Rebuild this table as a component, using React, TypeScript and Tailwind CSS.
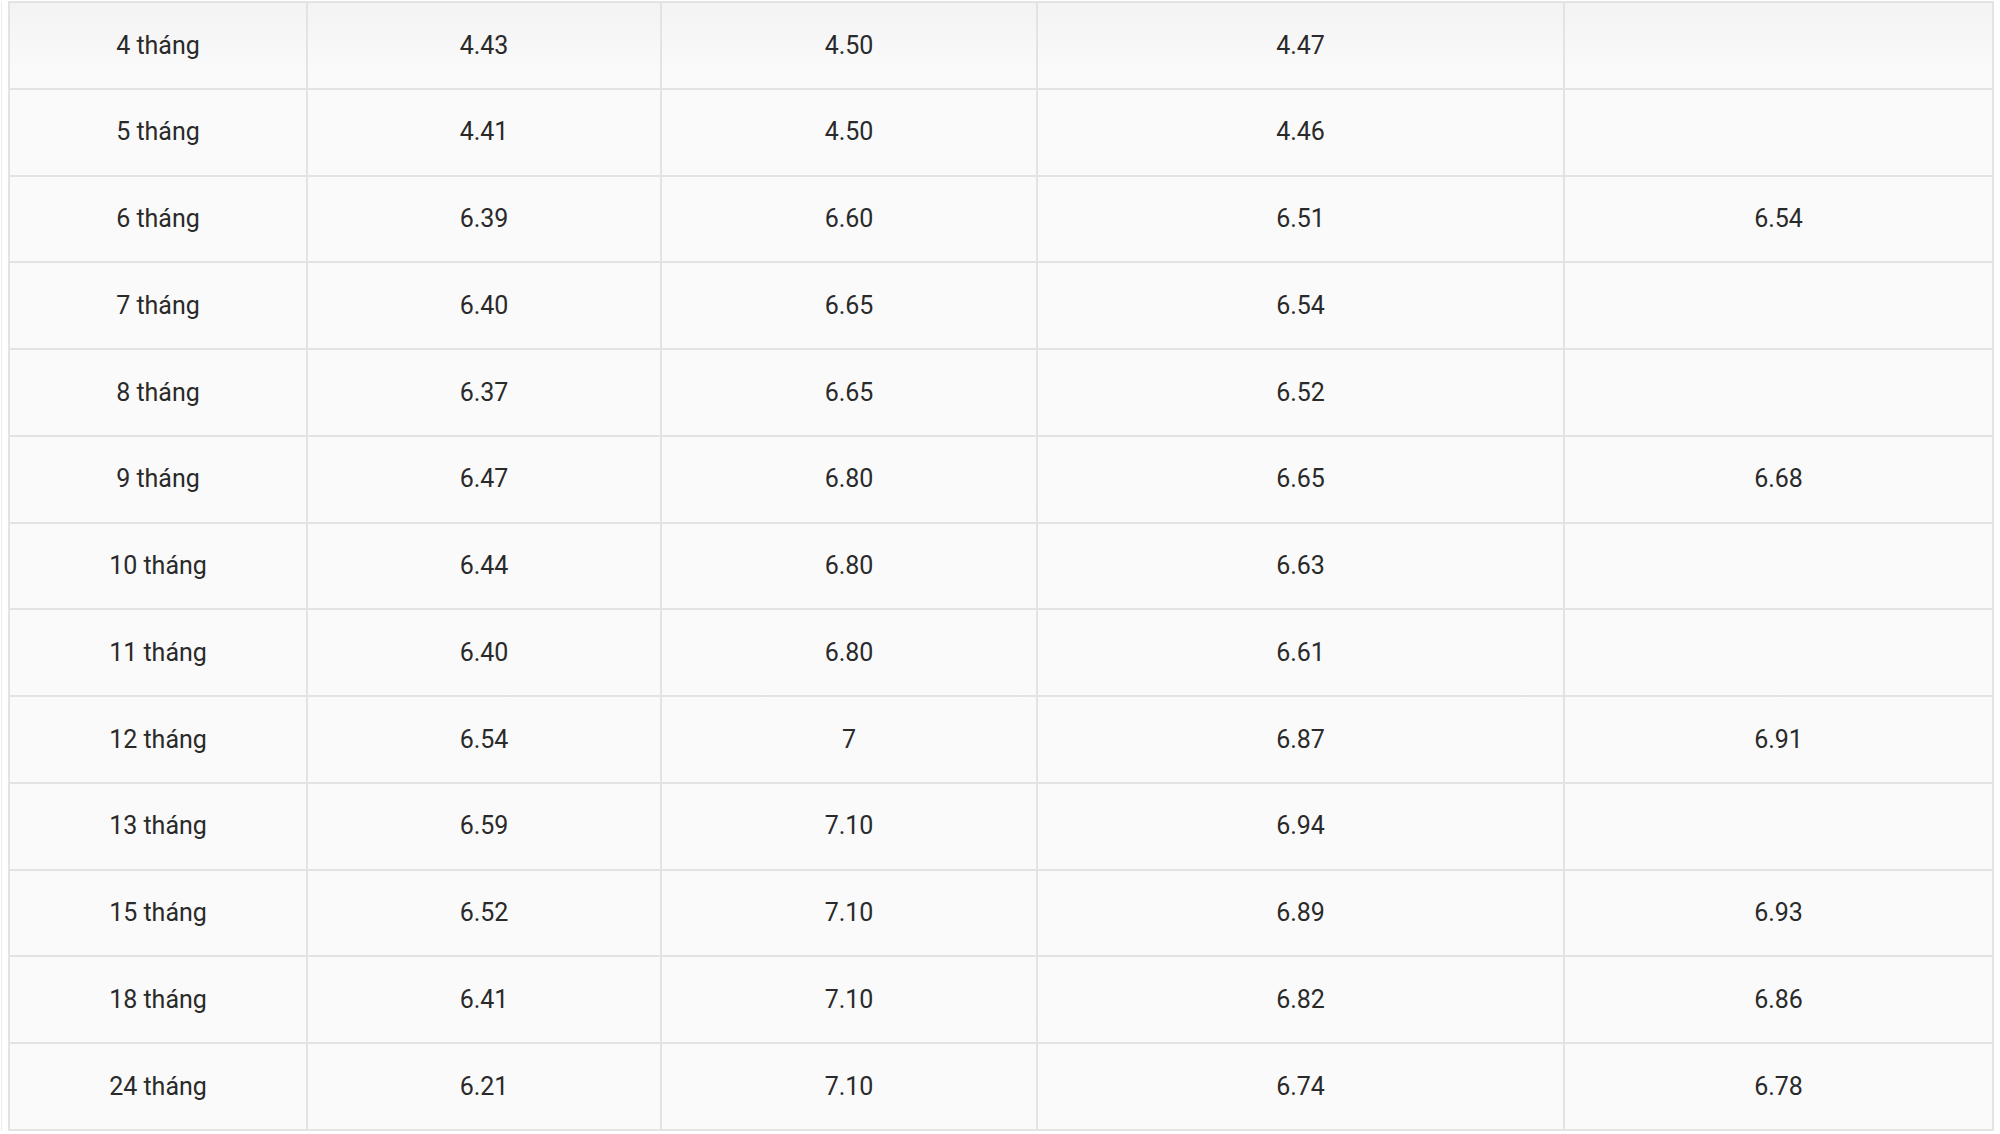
import React from 'react';

const ROWS: string[][] = [
  ['4 tháng', '4.43', '4.50', '4.47', ''],
  ['5 tháng', '4.41', '4.50', '4.46', ''],
  ['6 tháng', '6.39', '6.60', '6.51', '6.54'],
  ['7 tháng', '6.40', '6.65', '6.54', ''],
  ['8 tháng', '6.37', '6.65', '6.52', ''],
  ['9 tháng', '6.47', '6.80', '6.65', '6.68'],
  ['10 tháng', '6.44', '6.80', '6.63', ''],
  ['11 tháng', '6.40', '6.80', '6.61', ''],
  ['12 tháng', '6.54', '7', '6.87', '6.91'],
  ['13 tháng', '6.59', '7.10', '6.94', ''],
  ['15 tháng', '6.52', '7.10', '6.89', '6.93'],
  ['18 tháng', '6.41', '7.10', '6.82', '6.86'],
  ['24 tháng', '6.21', '7.10', '6.74', '6.78'],
];

const App: React.FC = () => {
  return (
    <div className="w-[2000px] h-[1134px] overflow-hidden bg-white pl-[1px] pt-[1px]">
      <div className="w-[1993px] pl-[6px] border-l border-[#ececec]">
        <div className="grid grid-cols-[298px_354px_376px_527px_429px] border-t-2 border-l-2 border-[#e3e3e3] bg-gradient-to-b from-[#f3f3f3] to-[#fafafa] to-[6%] text-[25px] text-[#2a2a2a] font-['Roboto',sans-serif]">
          {ROWS.map((row, i) =>
            row.map((cell, j) => (
              <div
                key={`${i}-${j}`}
                className="h-[86.75px] flex items-center justify-center border-r-2 border-b-2 border-[#e3e3e3]"
              >
                {cell}
              </div>
            ))
          )}
        </div>
      </div>
    </div>
  );
};

export default App;
